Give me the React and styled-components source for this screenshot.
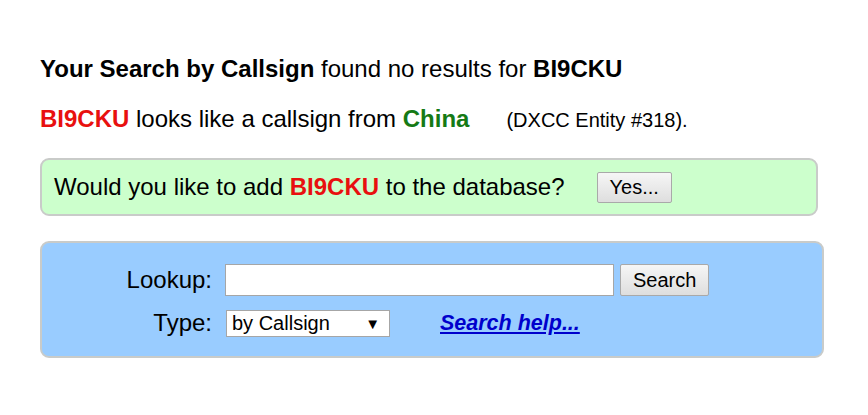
import React from "react";
import styled, { createGlobalStyle } from "styled-components";

const GlobalStyle = createGlobalStyle`
  body {
    margin: 0;
    background: #ffffff;
    font-family: "Liberation Sans", Arial, sans-serif;
    color: #000;
  }
`;

const Page = styled.div`
  width: 868px;
  height: 415px;
  padding: 55px 0 0 40px;
  box-sizing: border-box;
`;

const Headline = styled.div`
  font-size: 24px;
  line-height: 28px;
  margin-bottom: 22px;
`;

const Guess = styled.div`
  display: flex;
  align-items: baseline;
  font-size: 24px;
  line-height: 28px;
  margin-bottom: 24px;
`;

const Entity = styled.span`
  font-size: 20px;
  margin-left: 37px;
`;

const Call = styled.b`
  color: ${(p) => (p.$red ? "#e8100f" : "#000")};
`;

const Country = styled.b`
  color: #157a15;
`;

const Panel = styled.div`
  box-sizing: border-box;
  width: ${(p) => p.$width}px;
  background: ${(p) => p.$bg};
  border: 2px solid #c9cbc9;
  border-radius: 9px;
`;

const AddPanel = styled(Panel)`
  display: flex;
  align-items: center;
  height: 58px;
  padding-left: 12px;
  font-size: 24px;
  margin-bottom: 25px;
`;

const Button = styled.button`
  font-family: "Liberation Sans", Arial, sans-serif;
  font-size: ${(p) => p.$size || 20}px;
  height: ${(p) => p.$h}px;
  padding: 0 ${(p) => p.$pad}px;
  background: linear-gradient(#f6f6f6, #dedede);
  border: 1px solid #a9a9a9;
  border-radius: 2px;
  color: #000;
`;

const YesButton = styled(Button)`
  margin-left: 32px;
`;

const SearchPanel = styled(Panel)`
  height: 117px;
  padding-top: 21px;
  display: grid;
  grid-template-columns: 170px auto;
  column-gap: 13px;
  row-gap: 13px;
  align-content: start;
`;

const Label = styled.label`
  font-size: 24px;
  text-align: right;
  align-self: center;
`;

const Row = styled.div`
  display: flex;
  align-items: center;
`;

const Input = styled.input`
  box-sizing: border-box;
  width: 389px;
  height: 32px;
  border: 1px solid #a6a6a6;
  background: #fff;
  margin-right: 6px;
`;

const Select = styled.div`
  box-sizing: border-box;
  width: 164px;
  height: 27px;
  border: 1px solid #a6a6a6;
  background: #fff;
  display: flex;
  align-items: center;
  justify-content: space-between;
  padding: 0 9px 0 5px;
  font-size: 20px;
  margin-left: 1px;
`;

const Arrow = styled.span`
  font-size: 15px;
`;

const HelpLink = styled.a`
  color: #0000cc;
  font-weight: bold;
  font-style: italic;
  font-size: 21.5px;
  margin-left: 50px;
  text-decoration: underline;
`;

export default function App() {
  return (
    <>
      <GlobalStyle />
      <Page>
        <Headline>
          <b>Your Search by Callsign</b> found no results for <b>BI9CKU</b>
        </Headline>
        <Guess>
          <span>
            <Call $red>BI9CKU</Call> looks like a callsign from <Country>China</Country>
          </span>
          <Entity>(DXCC Entity #318).</Entity>
        </Guess>
        <AddPanel $width={778} $bg="#ccffcc">
          Would you like to add&nbsp;<Call $red>BI9CKU</Call>&nbsp;to the database?
          <YesButton $h={31} $pad={12}>Yes...</YesButton>
        </AddPanel>
        <SearchPanel $width={784} $bg="#99ccff">
          <Label>Lookup:</Label>
          <Row>
            <Input type="text" />
            <Button $h={32} $pad={12}>Search</Button>
          </Row>
          <Label>Type:</Label>
          <Row>
            <Select>
              by Callsign <Arrow>▼</Arrow>
            </Select>
            <HelpLink href="#">Search help...</HelpLink>
          </Row>
        </SearchPanel>
      </Page>
    </>
  );
}
